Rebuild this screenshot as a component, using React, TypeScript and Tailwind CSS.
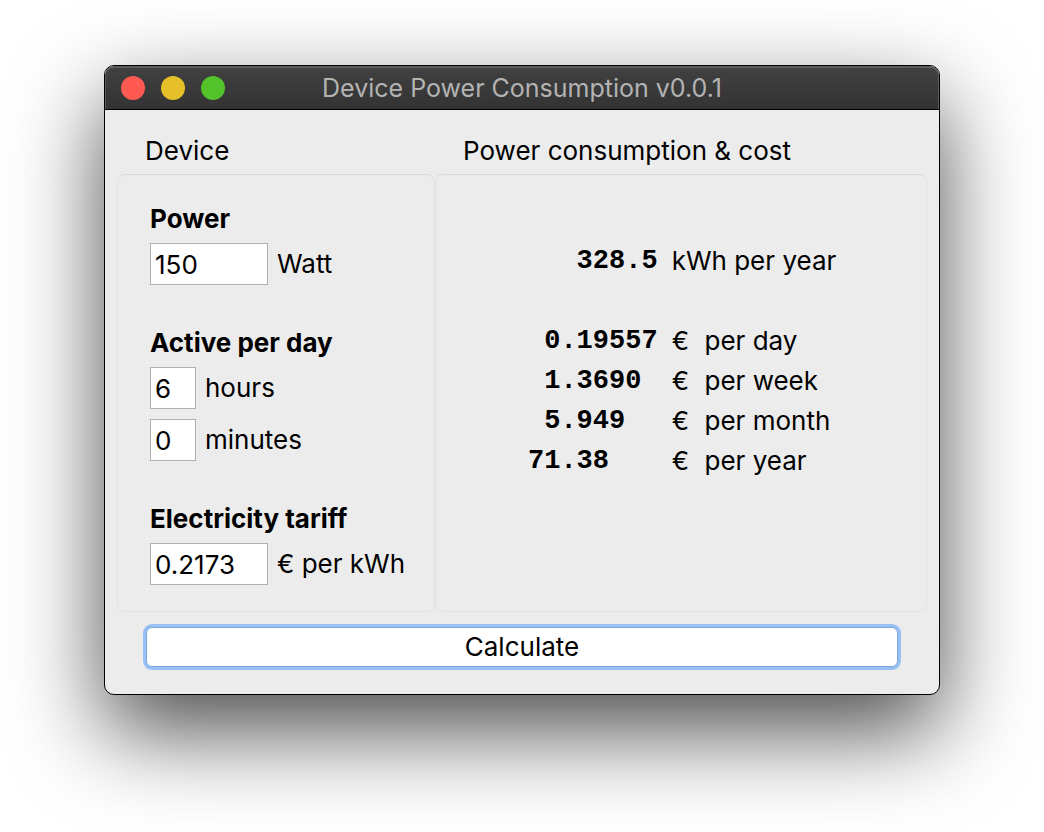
import { useState } from "react";
import type { FormEvent, ReactNode } from "react";

const COSTS = [
  { period: "day", days: 1, decimals: 5 },
  { period: "week", days: 7, decimals: 4 },
  { period: "month", days: 365 / 12, decimals: 3 },
  { period: "year", days: 365, decimals: 2 },
];

// Pads a number so that the decimal points line up in a monospaced column.
function alignPoint(value: number, decimals: number): string {
  return value.toFixed(decimals).padStart(decimals + 3).padEnd(8);
}

type FieldProps = {
  id: string;
  unit: string;
  value: string;
  wide?: boolean;
  onChange: (value: string) => void;
};

function Field({ id, unit, value, wide = false, onChange }: FieldProps) {
  return (
    <div className="flex items-center gap-[9px]">
      <input
        id={id}
        type="text"
        inputMode="decimal"
        value={value}
        onChange={(e) => onChange(e.target.value)}
        className={`${wide ? "w-[118px]" : "w-[46px]"} h-[42px] border border-[#b0b0b0] bg-white px-1 outline-none`}
      />
      <label htmlFor={id}>{unit}</label>
    </div>
  );
}

function FieldGroup({ title, children }: { title: string; children: ReactNode }) {
  return (
    <div>
      <h3 className="mb-2 font-bold">{title}</h3>
      <div className="flex flex-col gap-2.5">{children}</div>
    </div>
  );
}

function Panel({ title, className, children }: { title: string; className: string; children: ReactNode }) {
  return (
    <section className={`flex flex-col ${className}`}>
      <h2 className="mb-[7px] px-7">{title}</h2>
      <div className="flex-1 rounded-lg border border-[#e3e3e3] border-t-[#dadada]">{children}</div>
    </section>
  );
}

export default function App() {
  const [power, setPower] = useState("150");
  const [hours, setHours] = useState("6");
  const [minutes, setMinutes] = useState("0");
  const [tariff, setTariff] = useState("0.2173");
  const [result, setResult] = useState({ kwhPerDay: 0.9, costPerDay: 0.19557 });

  function calculate(e: FormEvent) {
    e.preventDefault();
    const kwhPerDay = (Number(power) / 1000) * (Number(hours) + Number(minutes) / 60);
    setResult({ kwhPerDay, costPerDay: kwhPerDay * Number(tariff) });
  }

  return (
    <div className="min-h-screen overflow-hidden bg-white px-[104px] pt-[65px] pb-[137px] font-['Inter','Liberation_Sans',sans-serif] text-[26px] leading-8 text-black">
      <main className="overflow-hidden rounded-[10px] border border-black bg-[#ececec] shadow-[0_36px_90px_rgba(0,0,0,0.7)]">
        <header className="grid h-11 grid-cols-[1fr_auto_1fr] items-center rounded-t-[9px] border-b border-black bg-linear-to-b from-[#414141] to-[#333333] px-4 shadow-[inset_0_1px_0_1px_#5c5c5c]">
          <div className="flex gap-4">
            <button type="button" aria-label="Close" className="size-6 rounded-full bg-[#ff5a52]" />
            <button type="button" aria-label="Minimize" className="size-6 rounded-full bg-[#e6c029]" />
            <button type="button" aria-label="Zoom" className="size-6 rounded-full bg-[#53c22b]" />
          </div>
          <h1 className="text-[25px] text-[#b3b3b3]">Device Power Consumption v0.0.1</h1>
        </header>

        <form onSubmit={calculate} className="px-3 pt-[25px] pb-[27px]">
          <div className="flex">
            <Panel title="Device" className="w-[318px] shrink-0">
              <div className="flex flex-col gap-[42px] px-8 pt-7 pb-[26px] whitespace-nowrap">
                <FieldGroup title="Power">
                  <Field id="power" unit="Watt" value={power} wide onChange={setPower} />
                </FieldGroup>
                <FieldGroup title="Active per day">
                  <Field id="hours" unit="hours" value={hours} onChange={setHours} />
                  <Field id="minutes" unit="minutes" value={minutes} onChange={setMinutes} />
                </FieldGroup>
                <FieldGroup title="Electricity tariff">
                  <Field id="tariff" unit="€ per kWh" value={tariff} wide onChange={setTariff} />
                </FieldGroup>
              </div>
            </Panel>

            <Panel title="Power consumption &amp; cost" className="flex-1">
              <table className="mt-[66px] ml-[92px] leading-10">
                <tbody>
                  <tr>
                    <td className="pr-3.5 pb-10 font-['Liberation_Mono',monospace] text-[27px] font-bold whitespace-pre">
                      {(result.kwhPerDay * 365).toFixed(1).padStart(8)}
                    </td>
                    <td colSpan={2} className="pb-10">kWh per year</td>
                  </tr>
                  {COSTS.map(({ period, days, decimals }) => (
                    <tr key={period}>
                      <td className="pr-3.5 font-['Liberation_Mono',monospace] text-[27px] font-bold whitespace-pre">
                        {alignPoint(result.costPerDay * days, decimals)}
                      </td>
                      <td className="pr-3.5">€</td>
                      <td>per {period}</td>
                    </tr>
                  ))}
                </tbody>
              </table>
            </Panel>
          </div>

          <div className="mt-[15px] px-[29px]">
            <button
              type="submit"
              className="h-10 w-full rounded-md border border-[#7aa7dc] bg-white shadow-[0_0_0_3px_#97c1f5]"
            >
              Calculate
            </button>
          </div>
        </form>
      </main>
    </div>
  );
}
